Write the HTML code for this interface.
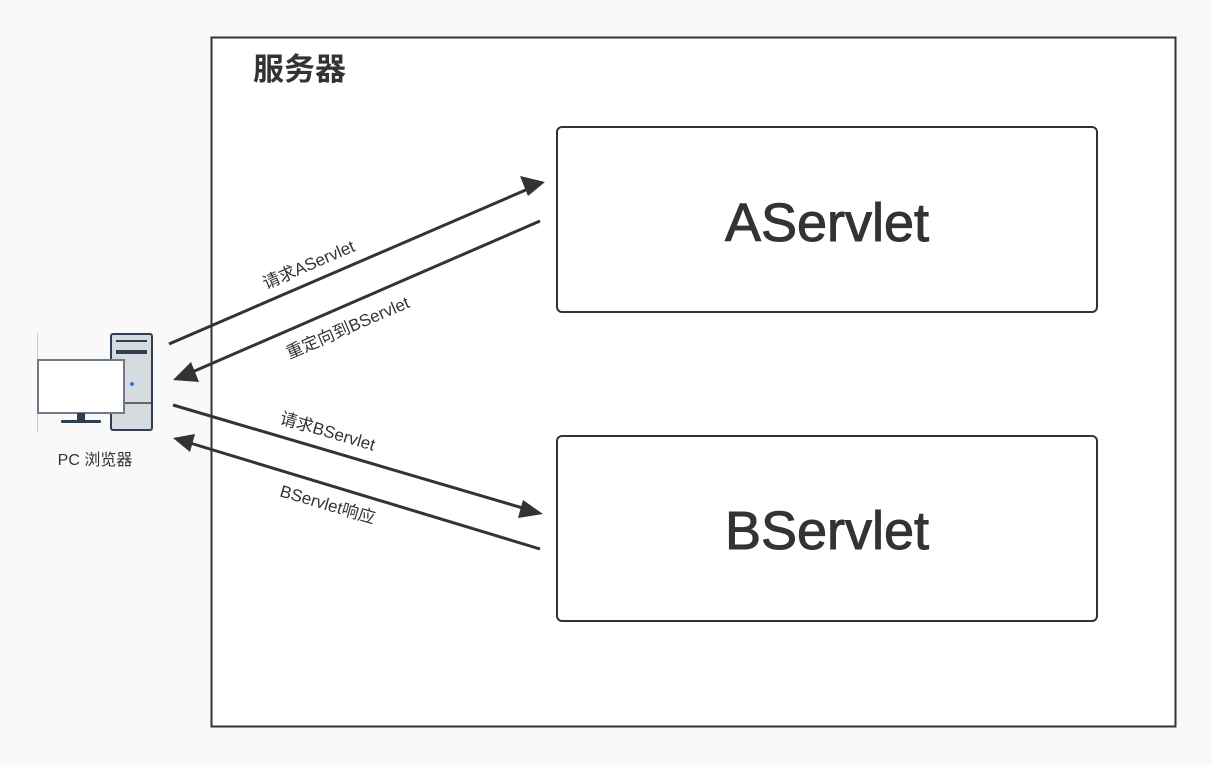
<!DOCTYPE html>
<html><head><meta charset="utf-8"><style>
html,body{margin:0;padding:0;background:#f9f9f9;}
body{width:1212px;height:765px;position:relative;overflow:hidden;font-family:"Liberation Sans","Noto Sans CJK SC",sans-serif;}
</style></head><body>
<svg width="1212" height="765" viewBox="0 0 1212 765" xmlns="http://www.w3.org/2000/svg" style="position:absolute;left:0;top:0">
<rect x="0" y="0" width="1212" height="765" fill="#f9f9f9"/>
<rect x="211.5" y="37.5" width="964" height="689" fill="#fff" stroke="#333" stroke-width="2"/>
<text x="253" y="80" font-size="31" font-weight="bold" fill="#333" font-family="Noto Sans CJK SC, sans-serif">服务器</text>
<rect x="557" y="127" width="540" height="185" rx="5" fill="#fff" stroke="#333" stroke-width="2"/>
<rect x="557" y="436" width="540" height="185" rx="5" fill="#fff" stroke="#333" stroke-width="2"/>
<g font-size="54" fill="#333" stroke="#333" stroke-width="1" text-anchor="middle" font-family="Liberation Sans, sans-serif">
<text x="827" y="241">AServlet</text>
<text x="827" y="549">BServlet</text>
</g>
<g stroke="#333" stroke-width="3" fill="none">
<line x1="169" y1="344" x2="528" y2="189"/>
<line x1="540" y1="221" x2="190" y2="373"/>
<line x1="173" y1="405" x2="526" y2="509"/>
<line x1="540" y1="549" x2="190" y2="443"/>
</g>
<g fill="#333">
<polygon points="545,182 520,176 528,196"/>
<polygon points="173,380 191,362 199,382"/>
<polygon points="543,514 523,500 518,518"/>
<polygon points="173,438 195,434 190,452"/>
</g>
<g font-size="17" fill="#333" font-family="Liberation Sans, Noto Sans CJK SC, sans-serif" text-anchor="middle">
<text transform="translate(311,270) rotate(-23.3)">请求AServlet</text>
<text transform="translate(350,333) rotate(-23.3)">重定向到BServlet</text>
<text transform="translate(326,437) rotate(16.4)">请求BServlet</text>
<text transform="translate(326,510) rotate(16.4)">BServlet响应</text>
</g>
<!-- PC -->
<line x1="37.5" y1="333" x2="37.5" y2="432" stroke="#ccc" stroke-width="1"/>
<rect x="111" y="334" width="41" height="96" rx="2" fill="#d6dbe0" stroke="#2e3f52" stroke-width="2"/>
<line x1="116" y1="341" x2="147" y2="341" stroke="#2e3f52" stroke-width="2"/>
<rect x="116" y="350" width="31" height="4" fill="#2e3f52"/>
<line x1="112" y1="403" x2="151" y2="403" stroke="#2e3f52" stroke-width="1.5"/>
<circle cx="132" cy="384" r="2" fill="#2a7de1"/>
<rect x="38" y="360" width="86" height="53" fill="#fff" stroke="#6f7a86" stroke-width="2"/>
<rect x="77" y="413" width="8" height="7" fill="#2e3f52"/>
<rect x="61" y="420" width="40" height="3" rx="1" fill="#2e3f52"/>
<text x="95" y="465" font-size="16" fill="#333" text-anchor="middle" font-family="Liberation Sans, Noto Sans CJK SC, sans-serif">PC 浏览器</text>
</svg>
</body></html>
